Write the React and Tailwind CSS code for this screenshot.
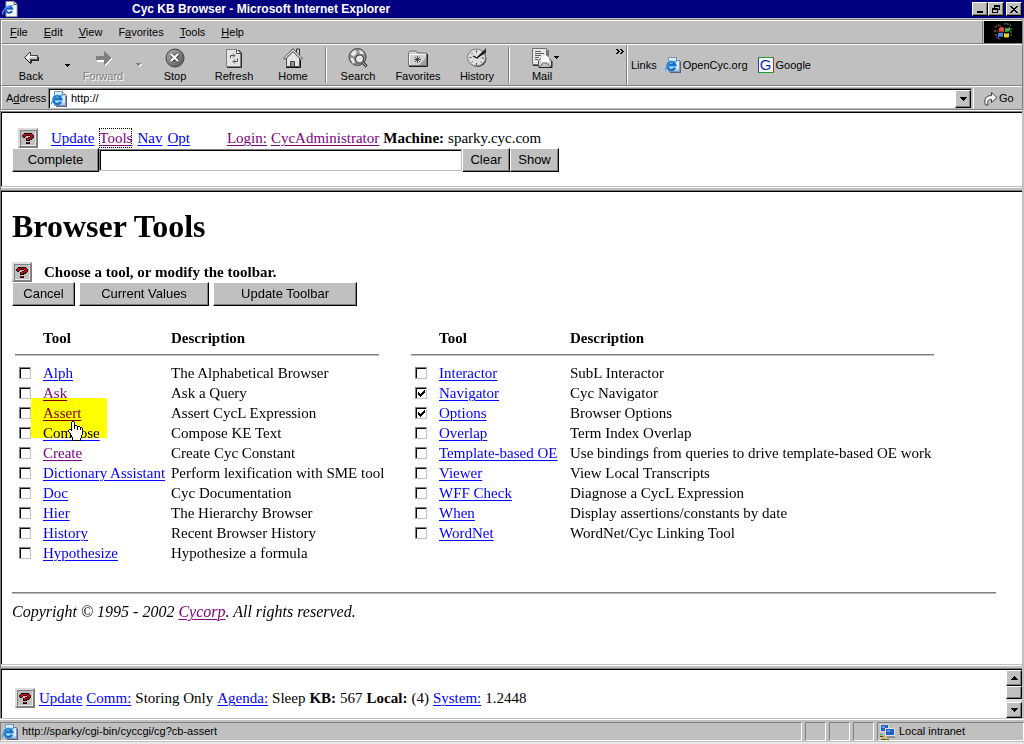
import React from "react";

const RAISED =
  "bg-[#c0c0c0] border border-t-white border-l-white border-b-black border-r-black shadow-[inset_-1px_-1px_0_#808080]";

function PixelArt({ rows, palette, className, label }) {
  const width = Math.max(...rows.map((r) => r.length));
  return (
    <svg
      className={className}
      width={width}
      height={rows.length}
      viewBox={`0 0 ${width} ${rows.length}`}
      shapeRendering="crispEdges"
      role={label ? "img" : undefined}
      aria-label={label}
      aria-hidden={label ? undefined : true}
    >
      {rows.flatMap((row, y) =>
        [...row].map((c, x) =>
          palette[c] ? <rect key={`${x}-${y}`} x={x} y={y} width="1" height="1" fill={palette[c]} /> : null
        )
      )}
    </svg>
  );
}

const QUESTION = [
  "..KKKKKKKK..",
  ".KRRRRRRRRK.",
  "KRRRKKKKRRRK",
  "KRRK....KRRK",
  ".KK...KKRRRK",
  "....KRRRRKK.",
  "....KRRKKK..",
  "....KKKK....",
  "............",
  "....KRRK....",
  "....KKKK....",
];

function HelpButton() {
  return (
    <button
      aria-label="Help"
      className="flex size-5 shrink-0 items-center justify-center border-2 border-t-[#dcdcdc] border-l-[#dcdcdc] border-r-[#808080] border-b-[#808080] bg-[#c0c0c0] shadow-[inset_1px_1px_0_#808080,inset_-1px_-1px_0_#e8e8e8]"
    >
      <PixelArt rows={QUESTION} palette={{ K: "#000", R: "#d80000" }} />
    </button>
  );
}

const CARET5 = ["KKKKK", ".KKK.", "..K.."];
const CARET7 = ["KKKKKKK", ".KKKKK.", "..KKK..", "...K..."];
const CARET7_UP = ["...K...", "..KKK..", ".KKKKK.", "KKKKKKK"];
const BLACK = { K: "#000" };

function IePage() {
  return (
    <svg width="16" height="16" viewBox="0 0 16 16" className="shrink-0" aria-hidden="true">
      <path d="M5 1h7l4 4v11H5z" fill="#506080" />
      <path d="M3.500 .500h8l3 3v11h-11z" fill="#dcecff" stroke="#8098b8" />
      <path d="M11.500 .500v3h3" fill="#fff" stroke="#5878a0" />
      <path d="M4 12h10v2H4z" fill="#a8ccf0" />
      <circle cx="6.500" cy="8.500" r="5.500" fill="#a0d4f8" />
      <path d="M10 10.800A4 4 0 1 1 10.300 8.200H3.500" fill="none" stroke="#1870c8" strokeWidth="2.300" />
      <path d="M1 13.500C-1 10 6 3 12 4.500" fill="none" stroke="#40a0e0" strokeWidth="1.200" />
    </svg>
  );
}

function TitleIcon() {
  return (
    <svg width="16" height="16" viewBox="0 0 16 16" className="shrink-0" aria-hidden="true">
      <path d="M4 .5h8l3 3v12H4z" fill="#fff" stroke="#a0a0a0" />
      <path d="M12 .5v3h3" fill="#d8d8d8" stroke="#606060" />
      <path d="M10 10A3.200 3.200 0 1 1 10.200 7.800H4.500" fill="none" stroke="#1060c8" strokeWidth="2" />
      <path d="M1 13.500C-.5 10 6 3 12 4.500" fill="none" stroke="#58b0f0" strokeWidth="1.200" />
    </svg>
  );
}

function BackIcon() {
  return (
    <PixelArt
      rows={[
        "................",
        "................",
        "................",
        "................",
        "......KK........",
        ".....KGK........",
        "....KGWK........",
        "...KGWWKKKKKKKK.",
        "..KGWWWWWWWWWGK.",
        ".KGWWWWGGGGGGGKD",
        "..DGWWGGGGGGGGKD",
        "...DGWGKKKKKKKKD",
        "....DGGKDDDDDDDD",
        ".....DGKD.......",
        "......DKD.......",
        ".......D........",
        "................",
        "................",
        "................",
        "................",
      ]}
      palette={{ K: "#484848", G: "#c8c8c8", W: "#f4f4f4", D: "#202020" }}
    />
  );
}

function ForwardIcon() {
  return (
    <svg width="20" height="20" viewBox="0 0 20 20" aria-hidden="true" shapeRendering="crispEdges">
      <path d="M19 11l-7-7v5H4v5h8v4z" fill="#fff" />
      <path d="M18 10l-7-7v5H3v4h8v5z" fill="#808080" />
    </svg>
  );
}

function StopIcon() {
  return (
    <svg width="20" height="20" viewBox="0 0 20 20" aria-hidden="true">
      <defs>
        <linearGradient id="stopFill" x1="0" y1="0" x2="1" y2="1">
          <stop offset="0" stopColor="#b0b0b0" />
          <stop offset="1" stopColor="#505050" />
        </linearGradient>
      </defs>
      <circle cx="10" cy="10" r="9" fill="url(#stopFill)" stroke="#404040" />
      <path d="M6.500 6.500l6.500 6.500M13 6.500l-6.500 6.500" stroke="#303030" strokeWidth="3.500" />
      <path d="M6 6l7 7M13 6l-7 7" stroke="#fff" strokeWidth="2.200" />
    </svg>
  );
}

function RefreshIcon() {
  return (
    <svg width="20" height="20" viewBox="0 0 20 20" aria-hidden="true">
      <path d="M3 2h12l3 3v15H3z" fill="#303030" />
      <path d="M2.500 1.500h10l4 4v13h-14z" fill="#e4e4e4" stroke="#808080" />
      <path d="M12.500 1.500v4h4" fill="#fff" stroke="#505050" />
      <path d="M6.500 10V7.500h4M9 5.500l2 2-2 2" fill="none" stroke="#505050" />
      <path d="M13.500 10.500V13.500h-4M11 11.500l-2 2 2 2" fill="none" stroke="#505050" />
    </svg>
  );
}

function HomeIcon() {
  return (
    <svg width="20" height="20" viewBox="0 0 20 20" aria-hidden="true">
      <path d="M13.500 1h3v7h-3z" fill="#d0d0d0" stroke="#303030" />
      <path d="M3.500 10v8.500h13V10L10 3.500z" fill="#e4e4e4" stroke="#505050" />
      <path d="M1 11l9-9 9 9" fill="none" stroke="#303030" strokeWidth="2.400" />
      <path d="M1.500 10.500l8.500-8.500 8.500 8.500" fill="none" stroke="#f8f8f8" strokeWidth="1.200" />
      <path d="M7.500 13.500h4v5h-4z" fill="#909090" stroke="#404040" />
      <path d="M3 19.500h14.500V12" fill="none" stroke="#101010" />
    </svg>
  );
}

function SearchIcon() {
  return (
    <svg width="20" height="20" viewBox="0 0 20 20" aria-hidden="true">
      <circle cx="9.500" cy="9" r="8.500" fill="#909090" stroke="#484848" />
      <path d="M2.500 6l3-3.500 3 0 0 3-3 3zM11 2l3 1 2 3-4 0zM2 10l3 0 2 4-2 2z" fill="#e8e8e8" />
      <circle cx="11.500" cy="11" r="4" fill="#e8e8e8" stroke="#404040" strokeWidth="1.200" />
      <path d="M14.500 14l4 4.500" stroke="#303030" strokeWidth="3" />
      <path d="M14.500 14l3.500 4" stroke="#e0e0e0" strokeWidth="1" />
    </svg>
  );
}

function FavoritesIcon() {
  return (
    <svg width="20" height="20" viewBox="0 0 20 20" aria-hidden="true">
      <path d="M1 18.500h18.500V6" fill="none" stroke="#202020" />
      <path d="M.5 17.500V4.500l1.500-1.500h6l1.500 2h9v12.500z" fill="#d0d0d0" stroke="#707070" />
      <path d="M1.500 17V6.500h16.500" fill="none" stroke="#fff" />
      <path d="M18 10v7h-7z" fill="#a0a0a0" />
      <path d="M9.500 8v7M6 11.500h7M7 9l5 5M12 9l-5 5" stroke="#303030" strokeWidth=".8" />
    </svg>
  );
}

function HistoryIcon() {
  return (
    <svg width="20" height="20" viewBox="0 0 20 20" aria-hidden="true">
      <ellipse cx="10.500" cy="10.500" rx="9" ry="8.500" fill="#404040" />
      <ellipse cx="9.500" cy="9.500" rx="9" ry="8.500" fill="#dedede" stroke="#787878" />
      <path d="M9.500 2.500v2M2.500 9.500h2M14.500 10h2.500M9.500 15v2M4.500 5l1 1M4.500 14.500l1-1M14.500 14.500l-1-1" stroke="#404040" />
      <path d="M19 0v5l-8.500 5z" fill="#303030" />
      <path d="M6 8l4 2L17 3" fill="none" stroke="#101010" strokeWidth="1.200" />
    </svg>
  );
}

function MailIcon() {
  return (
    <svg width="22" height="20" viewBox="0 0 22 20" aria-hidden="true">
      <path d="M2 17.500h15V2" fill="none" stroke="#303030" />
      <path d="M1.500 .500h14v16h-14z" fill="#e8e8e8" stroke="#707070" />
      <path d="M4 3.500h6M4 5.500h9M4 7.500h6M4 9.500h4M4 11.500h3" stroke="#606060" />
      <path d="M7.500 12.500l6.500-5.500 6.500 5.500v6.500h-13z" fill="#d8d8d8" stroke="#505050" />
      <path d="M10 9.500l4-3 4 3v3.500l-4 2.500-4-2.500z" fill="#fff" />
      <path d="M8 19l4.500-4h3l4.500 4" fill="#c0c0c0" stroke="#606060" />
      <path d="M8 19.500h13V13" fill="none" stroke="#202020" />
    </svg>
  );
}

function GoIcon() {
  return (
    <svg width="14" height="15" viewBox="0 0 14 15" aria-hidden="true">
      <path d="M1.500 14C-.5 8 2 4.500 7.500 4.500V1.500l5.500 5-5.500 5V8.500C4.500 8 3 10 4 14z" fill="#f4f4f4" stroke="#404040" />
    </svg>
  );
}

function WindowsFlag() {
  return (
    <svg width="20" height="18" viewBox="0 0 20 18" aria-label="Windows" role="img">
      <path d="M2 4l4-2 2 1M1 8h4M2 12h4" stroke="#a04848" strokeWidth="1.500" strokeDasharray="2 1" fill="none" />
      <path d="M6 5q3-2 5 0v4q-2-1-5 0z" fill="#e05030" />
      <path d="M12 5q3 1 5-1v4q-3 1-5 1z" fill="#40b040" />
      <path d="M5 10q3-1 5 0v4q-2-1-5 0z" fill="#5080e0" />
      <path d="M11 10q3 1 5 0v4q-3 1-5 0z" fill="#f0d020" />
      <path d="M11 1q4-1 7 2M18 5v9" fill="none" stroke="#2c7050" strokeWidth="1.500" strokeDasharray="2 1" />
      <path d="M3 14l4 2" stroke="#304080" strokeWidth="1.500" />
    </svg>
  );
}

function NetworkIcon() {
  return (
    <svg width="16" height="16" viewBox="0 0 16 16" aria-hidden="true" shapeRendering="crispEdges">
      <rect x="1" y="0" width="9" height="8" fill="#d8d8d8" />
      <rect x="2" y="1" width="7" height="6" fill="#2060c8" />
      <rect x="3" y="2" width="3" height="2" fill="#60a0f0" />
      <rect x="0" y="9" width="8" height="3" fill="#b8b8b8" />
      <rect x="1" y="10" width="2" height="1" fill="#20c020" />
      <rect x="6" y="4" width="10" height="8" fill="#e0e0e0" />
      <rect x="7" y="5" width="8" height="6" fill="#2060c8" />
      <rect x="8" y="6" width="3" height="2" fill="#60a0f0" />
      <rect x="8" y="12" width="8" height="2" fill="#909090" />
      <rect x="1" y="12" width="4" height="1" fill="#404040" />
      <rect x="4" y="12" width="2" height="4" fill="#e0b020" />
      <rect x="2" y="15" width="8" height="1" fill="#606000" />
    </svg>
  );
}

const CHECK = ["......K", ".....KK", "K...KKK", "KK.KKK.", "KKKKK..", ".KKK...", "..K...."];

const HAND = [
  "....KK.........",
  "...KWWK........",
  "...KWWK........",
  "...KWWK........",
  "...KWWKKK......",
  "...KWWKWWKKK...",
  "...KWWKWWKWWKK.",
  "...KWWKWWKWWKWK",
  ".KKKWWWWWKWWKWK",
  "KWWKWWWWWWWWWWK",
  "KWWWWWWWWWWWWWK",
  ".KWWWWWWWWWWWWK",
  "..KWWWWWWWWWWWK",
  "..KWWWWWWWWWWWK",
  "...KWWWWWWWWWK.",
  "...KWWWWWWWWWK.",
  "....KWWWWWWWWK.",
  "....KWWWWWWWK..",
  "....KWWWWWWWK..",
  "....KKKKKKKKK..",
];

function A({ children, visited, focus }) {
  return (
    <a
      href="#"
      className={`underline underline-offset-2 decoration-1 ${visited ? "text-[#800080]" : "text-[#0000ff]"} ${
        focus ? "outline-1 -outline-offset-1 outline-dotted outline-black" : ""
      }`}
    >
      {children}
    </a>
  );
}

const MENUS = [
  ["", "F", "ile"],
  ["", "E", "dit"],
  ["", "V", "iew"],
  ["F", "a", "vorites"],
  ["", "T", "ools"],
  ["", "H", "elp"],
];

function ToolButton({ icon, label, width, disabled }) {
  return (
    <button
      disabled={disabled}
      className={`flex flex-col items-center gap-0.5 leading-3 ${width} ${
        disabled ? "text-[#808080] [text-shadow:1px_1px_0_#fff]" : ""
      }`}
    >
      {icon}
      {label}
    </button>
  );
}

function Divider() {
  return <div className="h-9 w-0.5 border-l border-[#808080] bg-white" />;
}

function PushButton({ children, className }) {
  return (
    <button className={`h-6 font-["Liberation_Sans",Arial,sans-serif] text-[13px] leading-4 ${RAISED} ${className}`}>
      {children}
    </button>
  );
}

const LEFT_TOOLS = [
  ["Alph", "The Alphabetical Browser"],
  ["Ask", "Ask a Query", { visited: true }],
  ["Assert", "Assert CycL Expression", { visited: true, pointed: true }],
  ["Compose", "Compose KE Text"],
  ["Create", "Create Cyc Constant", { visited: true }],
  ["Dictionary Assistant", "Perform lexification with SME tool"],
  ["Doc", "Cyc Documentation"],
  ["Hier", "The Hierarchy Browser"],
  ["History", "Recent Browser History"],
  ["Hypothesize", "Hypothesize a formula"],
];

const RIGHT_TOOLS = [
  ["Interactor", "SubL Interactor"],
  ["Navigator", "Cyc Navigator", { checked: true }],
  ["Options", "Browser Options", { checked: true }],
  ["Overlap", "Term Index Overlap"],
  ["Template-based OE", "Use bindings from queries to drive template-based OE work"],
  ["Viewer", "View Local Transcripts"],
  ["WFF Check", "Diagnose a CycL Expression"],
  ["When", "Display assertions/constants by date"],
  ["WordNet", "WordNet/Cyc Linking Tool"],
];

function ToolTable({ rows, tableWidth, nameWidth }) {
  return (
    <table className={`table-fixed border-separate border-spacing-0 text-left whitespace-nowrap ${tableWidth}`}>
      <thead>
        <tr className="h-[27px] align-top *:border-b *:border-[#808080] *:shadow-[0_1px_0_#c0c0c0]">
          <td className="w-7" />
          <th className={nameWidth}>Tool</th>
          <th>Description</th>
        </tr>
      </thead>
      <tbody className="before:block before:h-2 before:content-['']">
        {rows.map(([name, text, opts = {}]) => (
          <tr key={name} className="h-5">
            <td className="pl-1">
              <div className="grid w-3 items-center justify-items-center">
                <input
                  type="checkbox"
                  aria-label={name}
                  defaultChecked={opts.checked}
                  className="peer col-start-1 row-start-1 size-3 appearance-none border border-t-[#808080] border-l-[#808080] border-r-[#c0c0c0] border-b-[#c0c0c0] bg-white shadow-[inset_1px_1px_0_#000]"
                />
                <PixelArt
                  rows={CHECK}
                  palette={BLACK}
                  className="pointer-events-none invisible col-start-1 row-start-1 peer-checked:visible"
                />
              </div>
            </td>
            <td className={opts.pointed ? "relative" : ""}>
              <A visited={opts.visited}>{name}</A>
              {opts.pointed && (
                <>
                  <div className="pointer-events-none absolute -top-[5px] -left-3 h-10 w-[76px] bg-[#ffff00] mix-blend-multiply" />
                  <PixelArt
                    rows={HAND}
                    palette={{ K: "#000", W: "#fff" }}
                    className="pointer-events-none absolute top-[18px] left-[25px] z-10"
                  />
                </>
              )}
            </td>
            <td>{text}</td>
          </tr>
        ))}
      </tbody>
    </table>
  );
}

function FrameEdge() {
  return (
    <div className="flex h-1.5 shrink-0 flex-col border-t border-b border-t-[#c0c0c0] border-b-black bg-[#c0c0c0]">
      <div className="h-px bg-white" />
      <div className="h-0.5" />
      <div className="h-px bg-[#808080]" />
    </div>
  );
}

const SUNKEN = "border border-t-[#808080] border-l-[#808080] border-r-white border-b-white";

export default function App() {
  return (
    <div className='flex min-h-screen flex-col bg-[#c0c0c0] font-["Liberation_Sans",Arial,sans-serif] text-[11px] text-black'>
      <header className="flex h-[18px] items-center bg-[#000080] pr-0.5 pl-0.5">
        <TitleIcon />
        <h2 className="flex-1 pl-[114px] text-[12px] leading-4 font-bold whitespace-nowrap text-white">
          Cyc KB Browser - Microsoft Internet Explorer
        </h2>
        <button aria-label="Minimize" className={`flex h-3.5 w-4 items-end justify-center pb-0.5 ${RAISED}`}>
          <span className="h-0.5 w-1.5 bg-black" />
        </button>
        <button aria-label="Restore" className={`flex h-3.5 w-4 items-center justify-center ${RAISED}`}>
          <PixelArt
            rows={["..KKKKKK", "..KKKKKK", "..K....K", "KKKKKK.K", "KKKKKKKK", "K....K..", "K....K..", "KKKKKK.."]}
            palette={BLACK}
          />
        </button>
        <button aria-label="Close" className={`ml-0.5 flex h-3.5 w-4 items-center justify-center ${RAISED}`}>
          <PixelArt
            rows={["KK....KK", ".KK..KK.", "..KKKK..", "...KK...", "..KKKK..", ".KK..KK.", "KK....KK"]}
            palette={BLACK}
          />
        </button>
      </header>

      <div className="mt-px mr-px border border-[#808080] border-b-white">
        <nav className="flex h-6 items-stretch border-t border-b border-l border-t-white border-b-[#808080] border-l-white">
          <div className="flex flex-1 items-center gap-4 border-r border-[#808080] pl-2 leading-4">
            {MENUS.map(([a, key, b]) => (
              <button key={key}>
                {a}
                <span className="underline underline-offset-1">{key}</span>
                {b}
              </button>
            ))}
          </div>
          <div className="ml-px flex w-[38px] items-center justify-center bg-black">
            <WindowsFlag />
          </div>
        </nav>

        <div className="flex h-[42px] items-center border-t border-b border-l border-t-white border-b-[#808080] border-l-white">
          <ToolButton icon={<BackIcon />} label="Back" width="w-[58px]" />
          <button aria-label="Back history" className="flex w-3.5 justify-center">
            <PixelArt rows={CARET5} palette={BLACK} />
          </button>
          <ToolButton icon={<ForwardIcon />} label="Forward" width="w-[58px]" disabled />
          <button aria-label="Forward history" disabled className="flex w-3.5 justify-center">
            <PixelArt rows={["KKKKK.", ".KKKWW", "..KWW.", "...W.."]} palette={{ K: "#808080", W: "#fff" }} />
          </button>
          <ToolButton icon={<StopIcon />} label="Stop" width="w-[58px]" />
          <ToolButton icon={<RefreshIcon />} label="Refresh" width="w-[60px]" />
          <ToolButton icon={<HomeIcon />} label="Home" width="w-[58px]" />
          <div className="w-[3px]" />
          <Divider />
          <ToolButton icon={<SearchIcon />} label="Search" width="w-[62px]" />
          <ToolButton icon={<FavoritesIcon />} label="Favorites" width="w-[58px]" />
          <ToolButton icon={<HistoryIcon />} label="History" width="w-[60px]" />
          <div className="w-px" />
          <Divider />
          <div className="flex pl-1">
            <ToolButton icon={<MailIcon />} label="Mail" width="w-[56px]" />
            <button aria-label="Mail options" className="-ml-4 flex w-4 items-start justify-start pt-2">
              <PixelArt rows={CARET5} palette={BLACK} />
            </button>
          </div>
          <button aria-label="More buttons" className="mr-0.5 ml-auto self-start pt-1">
            <PixelArt rows={["KK..KK..", ".KK..KK.", "..KK..KK", ".KK..KK.", "KK..KK.."]} palette={BLACK} />
          </button>
          <div className="flex h-full w-[396px] items-center border-l border-[#808080] pl-1 shadow-[inset_1px_0_0_#fff]">
            <span>Links</span>
            <a href="#" className="ml-2 flex items-center gap-0.5">
              <IePage />
              OpenCyc.org
            </a>
            <a href="#" className="ml-2.5 flex items-center gap-0.5">
              <span className='flex size-4 items-center justify-center border border-t-[#20a020] border-r-[#e02020] border-b-[#20a020] border-l-[#2040d0] bg-white font-["Liberation_Sans",Arial,sans-serif] text-[15px] leading-4 text-[#1030a0]'>
                G
              </span>
              Google
            </a>
          </div>
        </div>

        <div className="flex h-6 items-center border-t border-b border-l border-t-white border-b-[#808080] border-l-white pl-1">
          <label htmlFor="address" className="w-[42px]">
            A<span className="underline underline-offset-1">d</span>dress
          </label>
          <div className="flex h-[21px] flex-1 items-center border border-t-[#808080] border-r-[#c0c0c0] border-b-[#c0c0c0] border-l-[#808080] bg-white pt-px pl-0.5 shadow-[inset_1px_1px_0_#000]">
            <IePage />
            <input id="address" defaultValue="http://" className="min-w-0 flex-1 pl-1 outline-none" />
            <button aria-label="Show addresses" className={`flex h-[18px] w-4 items-center justify-center ${RAISED}`}>
              <PixelArt rows={CARET7} palette={BLACK} />
            </button>
          </div>
          <button className="ml-px flex h-full w-[49px] items-center gap-px border-l border-white pl-2.5">
            <GoIcon />
            Go
          </button>
        </div>
      </div>

      <div className='mr-0.5 flex flex-1 flex-col border-l border-[#808080] font-["Liberation_Serif","Times_New_Roman",serif] text-[15px] leading-5'>
        <div className="flex flex-1 flex-col border-t border-[#808080]">
          <section className="border-t border-l border-black bg-white pt-[15px] pb-3.5 pl-2.5">
            <div className="flex items-center whitespace-nowrap">
              <div className="pl-1.5">
                <HelpButton />
              </div>
              <div className="flex gap-[5px] pl-[13px]">
                <A>Update</A>
                <A visited focus>
                  Tools
                </A>
                <A>Nav</A>
                <A>Opt</A>
              </div>
              <div className="flex gap-1 pl-[37px]">
                <A visited>Login:</A>
                <A visited>CycAdministrator</A>
                <b>Machine:</b>
                <span>sparky.cyc.com</span>
              </div>
            </div>
            <form className="flex items-center" onSubmit={(e) => e.preventDefault()}>
              <PushButton className="w-[87px]">Complete</PushButton>
              <input
                aria-label="Term to complete"
                className="h-[22px] w-[363px] border border-t-[#808080] border-r-[#c0c0c0] border-b-[#c0c0c0] border-l-[#808080] bg-white px-1 shadow-[inset_1px_1px_0_#000] outline-none"
              />
              <PushButton className="w-12">Clear</PushButton>
              <PushButton className="w-[49px]">Show</PushButton>
            </form>
          </section>
          <FrameEdge />

          <main className="isolate flex-1 border-l border-black bg-white pt-4 pr-[26px] pb-4 pl-2.5">
            <h1 className="text-[32px] leading-9 font-bold">Browser Tools</h1>
            <div className="flex items-center gap-3 pt-[18px]">
              <HelpButton />
              <b>Choose a tool, or modify the toolbar.</b>
            </div>
            <div className="flex gap-1">
              <PushButton className="w-[63px]">Cancel</PushButton>
              <PushButton className="w-[130px]">Current Values</PushButton>
              <PushButton className="w-36">Update Toolbar</PushButton>
            </div>
            <div className="flex items-start gap-8 pt-[22px] pl-[3px]">
              <ToolTable rows={LEFT_TOOLS} tableWidth="w-[364px]" nameWidth="w-32" />
              <ToolTable rows={RIGHT_TOOLS} tableWidth="w-[523px]" nameWidth="w-[131px]" />
            </div>
            <hr className="mt-[29px] border-t border-b border-t-[#808080] border-b-[#c0c0c0]" />
            <p className="pt-2 text-[16px] italic">
              Copyright © 1995 - 2002 <A visited>Cycorp</A>. All rights reserved.
            </p>
          </main>
          <FrameEdge />

          <section className="flex h-12 border-l border-black bg-white">
            <div className="flex flex-1 items-center gap-1 pt-2 pl-[13px] whitespace-nowrap">
              <HelpButton />
              <A>Update</A>
              <A>Comm:</A>
              <span>Storing Only</span>
              <A>Agenda:</A>
              <span>Sleep</span>
              <b>KB:</b>
              <span>567</span>
              <b>Local:</b>
              <span>(4)</span>
              <A>System:</A>
              <span>1.2448</span>
            </div>
            <div className="flex w-4 flex-col bg-[#e0e0e0]">
              <button aria-label="Scroll up" className={`flex h-4 items-center justify-center ${RAISED}`}>
                <PixelArt rows={CARET7_UP} palette={BLACK} />
              </button>
              <div className={`h-[13px] ${RAISED}`} />
              <button aria-label="Scroll down" className={`mt-auto flex h-4 items-center justify-center ${RAISED}`}>
                <PixelArt rows={CARET7} palette={BLACK} />
              </button>
            </div>
          </section>
        </div>
      </div>

      <footer className="flex h-[26px] gap-[3px] border-t border-[#c0c0c0] pt-[3px] pb-[3px] shadow-[inset_0_1px_0_#fff,inset_0_-2px_0_#e8e8e8]">
        <div className={`flex flex-1 items-center gap-1 pl-px ${SUNKEN}`}>
          <IePage />
          http://sparky/cgi-bin/cyccgi/cg?cb-assert
        </div>
        <div className={`w-[21px] ${SUNKEN}`} />
        <div className={`w-[21px] ${SUNKEN}`} />
        <div className={`w-[21px] ${SUNKEN}`} />
        <div className={`flex w-[147px] items-center gap-1 pl-px ${SUNKEN}`}>
          <NetworkIcon />
          Local intranet
        </div>
      </footer>
    </div>
  );
}
